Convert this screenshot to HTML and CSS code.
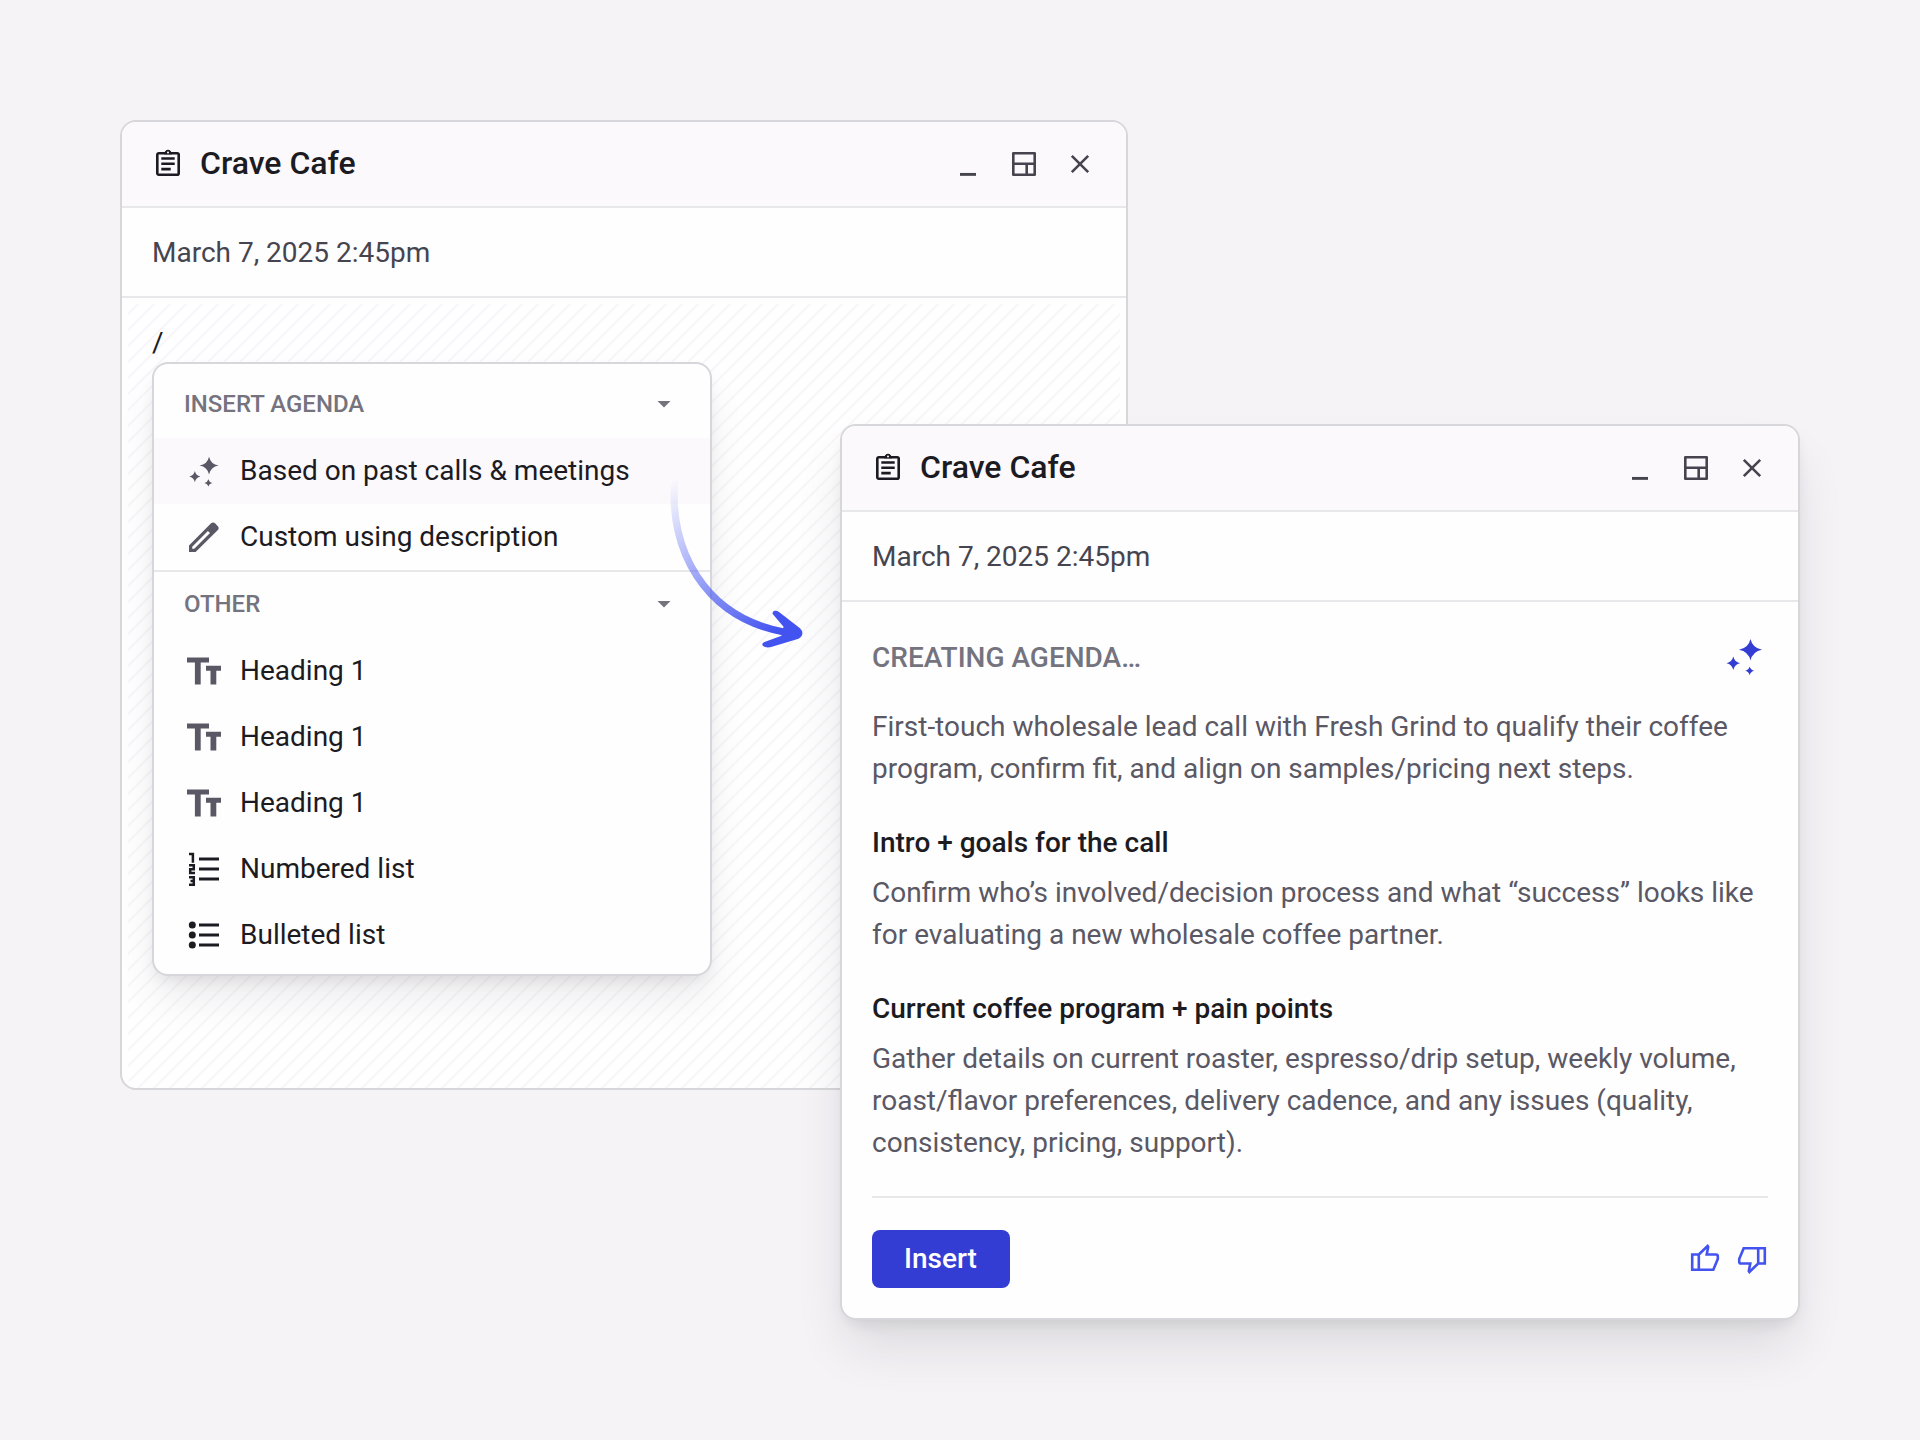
FILE: index.html
```html
<!DOCTYPE html>
<html lang="en">
<head>
    <meta charset="UTF-8">
    <meta name="viewport" content="width=device-width, initial-scale=1.0">
    <title>Crave Cafe</title>
    <link rel="stylesheet" href="styles.css">
</head>
<body>

<!-- Shared icons -->
<svg class="sprite" aria-hidden="true">
    <symbol id="icon-note" viewBox="0 0 32 32">
        <rect x="5.300" y="5.300" width="21.400" height="21.400" rx="1.500" fill="none" stroke="currentColor" stroke-width="2.600"/>
        <path d="M12 6V4.400h1a3.100 3.100 0 0 1 6 0h1V6z" fill="currentColor" stroke="currentColor" stroke-width=".8"/>
        <circle cx="16" cy="4.500" r="1" fill="#fbf9fc"/>
        <path d="M9.300 10.500h13.400M9.300 15.800h13.400M9.300 21.100h9.400" fill="none" stroke="currentColor" stroke-width="2.600"/>
    </symbol>
    <symbol id="icon-minimize" viewBox="0 0 32 32">
        <path d="M8 26.400h16" stroke="currentColor" stroke-width="2.900"/>
    </symbol>
    <symbol id="icon-layout" viewBox="0 0 32 32">
        <path d="M5.300 5.300h21.400v21.400H5.300zM5 15.800h22M18.700 16v11" fill="none" stroke="currentColor" stroke-width="2.600" stroke-linejoin="round"/>
    </symbol>
    <symbol id="icon-close" viewBox="0 0 32 32">
        <path d="M7.800 7.800l16.400 16.400M24.200 7.800L7.800 24.200" stroke="currentColor" stroke-width="2.600"/>
    </symbol>
    <symbol id="icon-sparkle" viewBox="0 0 40 40">
        <path d="M25.500 2Q27.500 11 37 12.800Q27.500 14.600 25.500 23.600Q23.500 14.600 14 12.800Q23.500 11 25.500 2z"/>
        <path d="M8.300 19.500Q9.600 25 15 26.200Q9.600 27.400 8.300 33Q7 27.400 1.500 26.200Q7 25 8.300 19.500z"/>
        <path d="M24.700 29.500Q25.600 33 29.300 33.800Q25.600 34.600 24.700 38.300Q23.800 34.600 20 33.800Q23.800 33 24.700 29.500z"/>
    </symbol>
    <symbol id="icon-pencil" viewBox="0 0 32 32">
        <path fill-rule="evenodd" d="M1 31v-6.500L22.800 2.600Q25 .2 27.300 2.600L29.600 4.900Q31.800 7 29.600 9.300L7.600 31zM4.200 27.800h2.100L22 12.100 19.900 10 4.200 25.700z"/>
    </symbol>
    <symbol id="icon-text" viewBox="0 0 34 28">
        <path d="M0 .5h22v5h-8.300v22H7.900v-22H0zM19 8.700h15v5h-4.700v13.800h-5.800V13.700H19z"/>
    </symbol>
    <symbol id="icon-numbered" viewBox="0 0 32 36">
        <path d="M11 8h20M11 18h20M11 28h20" fill="none" stroke="currentColor" stroke-width="3.200"/>
        <path d="M1 2.900h3.900v8.800M1 14.200h4.800v4H2.200v3.900H7M1 26.200h4.800v7.600H1M2.500 30h3.300" fill="none" stroke="currentColor" stroke-width="2.500"/>
    </symbol>
    <symbol id="icon-bulleted" viewBox="0 0 32 36">
        <path d="M11 8h20M11 18h20M11 28h20" fill="none" stroke="currentColor" stroke-width="3.200"/>
        <circle cx="4.300" cy="8" r="3.500"/>
        <circle cx="4.300" cy="18" r="3.500"/>
        <circle cx="4.300" cy="28" r="3.500"/>
    </symbol>
    <symbol id="icon-thumb" viewBox="0 0 30 28">
        <path d="M2.200 10.500h6.600v15.300H2.200zM8.800 10.500L17.600 2l.6 1-1.500 7.500h9.300q1.800 0 1.800 1.800v2.600L23.300 25.800H8.800" fill="none" stroke="currentColor" stroke-width="2.600"/>
    </symbol>
</svg>

<div class="canvas">
    <section class="window window-notes">
        <header class="window-header">
            <svg class="icon"><use href="#icon-note"/></svg>
            <h1>Crave Cafe</h1>
            <div class="window-actions">
                <svg class="icon"><use href="#icon-minimize"/></svg>
                <svg class="icon"><use href="#icon-layout"/></svg>
                <svg class="icon"><use href="#icon-close"/></svg>
            </div>
        </header>
        <div class="window-date">March 7, 2025 2:45pm</div>
        <div class="editor">
            <div class="slash">/</div>
            <div class="menu">
                <div class="menu-title menu-title-first"><span>INSERT AGENDA</span><i class="caret"></i></div>
                <div class="menu-item active"><svg class="icon-sparkle"><use href="#icon-sparkle"/></svg><span>Based on past calls &amp; meetings</span></div>
                <div class="menu-item"><svg class="icon-pencil"><use href="#icon-pencil"/></svg><span>Custom using description</span></div>
                <div class="menu-title menu-title-other"><span>OTHER</span><i class="caret"></i></div>
                <div class="menu-item"><svg class="icon-text"><use href="#icon-text"/></svg><span>Heading 1</span></div>
                <div class="menu-item"><svg class="icon-text"><use href="#icon-text"/></svg><span>Heading 1</span></div>
                <div class="menu-item"><svg class="icon-text"><use href="#icon-text"/></svg><span>Heading 1</span></div>
                <div class="menu-item"><svg class="icon-list"><use href="#icon-numbered"/></svg><span>Numbered list</span></div>
                <div class="menu-item"><svg class="icon-list"><use href="#icon-bulleted"/></svg><span>Bulleted list</span></div>
            </div>
        </div>
    </section>

    <section class="window window-agenda">
        <header class="window-header">
            <svg class="icon"><use href="#icon-note"/></svg>
            <h1>Crave Cafe</h1>
            <div class="window-actions">
                <svg class="icon"><use href="#icon-minimize"/></svg>
                <svg class="icon"><use href="#icon-layout"/></svg>
                <svg class="icon"><use href="#icon-close"/></svg>
            </div>
        </header>
        <div class="window-date">March 7, 2025 2:45pm</div>
        <div class="agenda">
            <div class="agenda-title">
                <span>CREATING AGENDA…</span>
                <svg class="icon-sparkle"><use href="#icon-sparkle"/></svg>
            </div>
            <p>First-touch wholesale lead call with Fresh Grind to qualify their coffee<br>program, confirm fit, and align on samples/pricing next steps.</p>
            <h2>Intro + goals for the call</h2>
            <p>Confirm who’s involved/decision process and what “success” looks like<br>for evaluating a new wholesale coffee partner.</p>
            <h2>Current coffee program + pain points</h2>
            <p>Gather details on current roaster, espresso/drip setup, weekly volume,<br>roast/flavor preferences, delivery cadence, and any issues (quality,<br>consistency, pricing, support).</p>
            <footer class="agenda-footer">
                <button type="button">Insert</button>
                <div class="votes">
                    <svg class="icon-thumb"><use href="#icon-thumb"/></svg>
                    <svg class="icon-thumb down"><use href="#icon-thumb"/></svg>
                </div>
            </footer>
        </div>
    </section>

    <!-- Arrow from the picked menu item to the agenda window -->
    <svg class="arrow" viewBox="0 0 150 180">
        <defs>
            <linearGradient id="arrowFade" gradientUnits="userSpaceOnUse" x1="10" y1="12" x2="110" y2="166">
                <stop offset="0" stop-color="#4353f0" stop-opacity="0"/>
                <stop offset="1" stop-color="#4353f0"/>
            </linearGradient>
        </defs>
        <path d="M14.800 10C8.500 79 44 147 124 162" fill="none" stroke="url(#arrowFade)" stroke-width="7.200"/>
        <path d="M112.700 144Q112 141 115 140.700Q117 140.500 119 142L140 158.300Q145.500 164 138.500 168.800L112 176.800Q106 178.300 103 176Q101 173.500 104.500 172L121.500 165.700L123.500 156.700z" fill="#4353f0"/>
    </svg>
</div>

</body>
</html>
```
FILE: styles.css
```css
* {
    box-sizing: border-box;
}

body {
    margin: 0;
    font-family: Roboto, "Liberation Sans", sans-serif;
    font-size: 28px;
    color: #1c1b22;
    background-color: #f5f3f6;
}

h1, h2, p {
    margin: 0;
}

.sprite {
    display: none;
}

.canvas {
    position: relative;
    width: 1920px;
    height: 1440px;
    overflow: hidden;
}

/* Windows */
.window {
    position: absolute;
    display: flex;
    flex-direction: column;
    border: 2px solid #d7d6da;
    border-radius: 16px;
    background-color: #fefefe;
}

.window-notes {
    left: 120px;
    top: 120px;
    width: 1008px;
    height: 970px;
}

.window-agenda {
    left: 840px;
    top: 424px;
    width: 960px;
    height: 896px;
    box-shadow: 0 8px 16px -6px rgba(28, 24, 34, 0.12), 0 32px 52px -6px rgba(28, 24, 34, 0.11);
}

.window-header {
    display: flex;
    align-items: center;
    height: 86px;
    padding: 0 30px;
    border-bottom: 2px solid #e8e7ea;
    border-radius: 14px 14px 0 0;
    background-color: #fbf9fc;
}

.window-header h1 {
    margin-left: 16px;
    padding-bottom: 2px;
    font-size: 32px;
    font-weight: 500;
}

.icon {
    width: 32px;
    height: 32px;
}

.window-actions {
    display: flex;
    gap: 24px;
    margin-left: auto;
    color: #46454f;
}

.window-date {
    height: 90px;
    padding: 0 30px;
    border-bottom: 2px solid #e8e7ea;
    line-height: 90px;
    color: #46454f;
}

/* Editor with slash menu */
.editor {
    flex: 1;
    margin: 6px 6px 0;
    padding: 18px 24px 0;
    background: repeating-linear-gradient(135deg, #fefefe 0, #fefefe 5.8px, #f7f5f9 6.500px, #f7f5f9 7.600px, #fefefe 8.300px, #fefefe 11.314px);
    border-radius: 0 0 10px 10px;
}

.slash {
    height: 40px;
    line-height: 42px;
}

.menu {
    width: 560px;
    height: 614px;
    border: 2px solid #d7d6da;
    border-radius: 16px;
    background-color: #fefefe;
    box-shadow: 0 8px 16px -6px rgba(28, 24, 34, 0.1), 0 24px 40px -6px rgba(28, 24, 34, 0.09);
}

.menu-title {
    display: flex;
    align-items: center;
    justify-content: space-between;
    height: 66px;
    padding: 0 39px 2px 30px;
    font-size: 24px;
    font-weight: 500;
    color: #74737e;
}

.menu-title-first {
    margin-top: 8px;
}

.menu-title-other {
    height: 68px;
    border-top: 2px solid #e8e7ea;
}

.caret {
    width: 14px;
    height: 7px;
    background-color: #74737e;
    clip-path: polygon(0 0, 100% 0, 50% 100%);
}

.menu-item {
    display: grid;
    grid-template-columns: 40px 1fr;
    gap: 16px;
    align-items: center;
    height: 66px;
    padding: 0 30px;
}

.menu-item span {
    padding-bottom: 2px;
}

.menu-item svg {
    justify-self: center;
    color: #1c1b22;
    fill: currentColor;
}

.menu-item.active {
    background-color: #fbf9fc;
}

.menu-item .icon-sparkle {
    width: 33px;
    height: 33px;
    color: #5a5864;
}

.menu-item .icon-pencil {
    width: 32px;
    height: 32px;
    color: #5a5864;
}

.menu-item .icon-text {
    width: 34px;
    height: 28px;
    color: #5a5864;
}

.icon-list {
    width: 32px;
    height: 36px;
}

/* Generated agenda */
.agenda {
    flex: 1;
    padding: 32px 30px 0;
}

.agenda-title {
    display: flex;
    align-items: center;
    justify-content: space-between;
    height: 46px;
    margin-bottom: 26px;
    padding-right: 3px;
    font-weight: 500;
    color: #74737e;
}

.agenda-title .icon-sparkle {
    width: 40px;
    height: 40px;
    fill: #333dd4;
}

.agenda p {
    line-height: 42px;
    color: #5a5864;
    white-space: nowrap;
}

.agenda h2 {
    margin: 32px 0 8px;
    font-size: 28px;
    font-weight: 500;
    line-height: 42px;
}

.agenda-footer {
    display: flex;
    align-items: center;
    justify-content: space-between;
    margin-top: 32px;
    padding-top: 32px;
    border-top: 2px solid #e8e7ea;
}

.agenda-footer button {
    width: 138px;
    height: 58px;
    padding: 0 1px 2px 0;
    border: none;
    border-radius: 8px;
    font-family: inherit;
    font-size: 28px;
    font-weight: 500;
    color: #fff;
    background-color: #333dd4;
}

.votes {
    display: flex;
    gap: 17px;
    padding-right: 1px;
    color: #4353f0;
}

.icon-thumb {
    width: 30px;
    height: 28px;
}

.icon-thumb.down {
    margin-top: 2px;
    transform: rotate(180deg);
}

.arrow {
    position: absolute;
    left: 660px;
    top: 470px;
    width: 150px;
    height: 180px;
}
```
